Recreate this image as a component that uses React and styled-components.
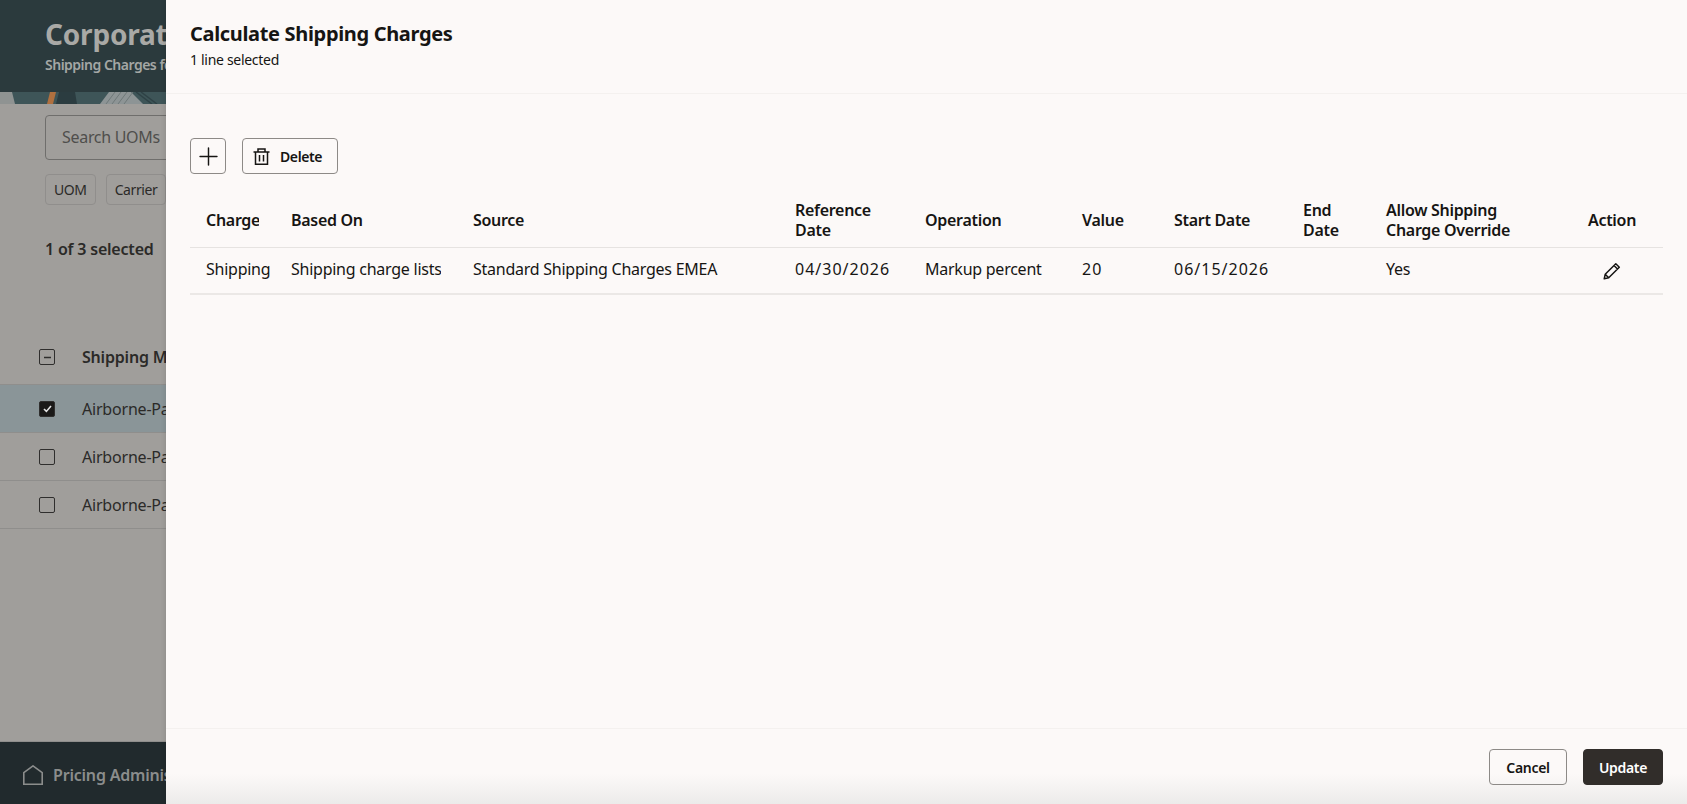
import React from 'react'
import styled, { createGlobalStyle } from 'styled-components'
import { Plus } from 'lucide-react'

const GlobalStyle = createGlobalStyle`
  html, body {
    margin: 0;
    height: 100%;
    overflow: hidden;
    background: #a09e9b;
  }
  #root {
    height: 100%;
  }
  * {
    box-sizing: border-box;
  }
`

const FONT = `"Noto Sans", "Open Sans", sans-serif`

const Page = styled.div`
  display: flex;
  width: 1687px;
  height: 804px;
  font-family: ${FONT};
  letter-spacing: -0.2px;
  overflow: hidden;
`

const Backdrop = styled.aside`
  display: flex;
  flex-direction: column;
  width: 166px;
  flex: none;
  overflow: hidden;
  background: #a09e9b;
  color: #2b2a28;
`

const Hero = styled.header`
  height: 92px;
  padding: 16px 0 0 45px;
  background: #2b3a3d;
  white-space: nowrap;
`

const HeroTitle = styled.div`
  font-size: 28px;
  line-height: 36px;
  font-weight: 700;
  color: #a9a9a6;
`

const HeroSub = styled.div`
  margin-top: 3px;
  font-size: 14px;
  line-height: 20px;
  font-weight: 600;
  letter-spacing: -0.5px;
  color: #a4a7a5;
`

const HeroStrip = styled.div`
  height: 12px;
  background: #3e5558;
  svg {
    display: block;
  }
`

const BackdropTools = styled.div`
  display: flex;
  flex-direction: column;
  align-items: flex-start;
  padding: 11px 0 0 45px;
  white-space: nowrap;
`

const SearchBox = styled.div`
  width: 200px;
  height: 45px;
  padding-left: 16px;
  border: 1px solid #6f6e6c;
  border-radius: 4px;
  font-size: 16px;
  line-height: 43px;
  letter-spacing: -0.3px;
  color: #4f4e4c;
`

const ChipRow = styled.div`
  display: flex;
  gap: 10px;
  margin-top: 14px;
`

const Chip = styled.span`
  height: 31px;
  padding: 0 8px;
  border: 1px solid #908e8c;
  border-radius: 4px;
  font-size: 14px;
  line-height: 29px;
  letter-spacing: -0.4px;
`

const SelectedCount = styled.div`
  margin-top: 33px;
  font-size: 16px;
  font-weight: 600;
  line-height: 22px;
`

const BackdropList = styled.div`
  margin-top: 70px;
`

const BackdropRow = styled.div`
  display: flex;
  align-items: center;
  gap: 27px;
  height: ${(p) => (p.$head ? 55 : 48)}px;
  padding-left: 39px;
  white-space: nowrap;
  font-size: 16px;
  font-weight: ${(p) => (p.$head ? 600 : 400)};
  background: ${(p) => (p.$selected ? '#8a9598' : 'transparent')};
  border-bottom: 1px solid #8f8e8c;
`

const Check = styled.span`
  display: flex;
  align-items: center;
  justify-content: center;
  width: 16px;
  height: 16px;
  flex: none;
  border: 1.5px solid #2f2e2d;
  border-radius: 2px;
  background: ${(p) => (p.$checked ? '#1a1918' : 'transparent')};
`

const BottomBar = styled.footer`
  display: flex;
  align-items: center;
  gap: 10px;
  height: 63px;
  margin-top: auto;
  padding: 3px 0 0 23px;
  background: #212a2d;
  border-top: 1px solid #8f8e8c;
  color: #8b8d8c;
  font-size: 16px;
  font-weight: 600;
  white-space: nowrap;
  svg {
    flex: none;
  }
`

const Drawer = styled.section`
  display: flex;
  flex-direction: column;
  flex: 1;
  min-width: 0;
  background: #fcf9f8;
  color: #161513;
  box-shadow: -2px 0 4px rgba(0, 0, 0, 0.08);
  position: relative;
  z-index: 1;
`

const DrawerHead = styled.div`
  height: 94px;
  padding: 19px 24px 0;
  border-bottom: 1px solid #f4f1ef;
`

const Title = styled.h1`
  margin: 0;
  font-size: 20px;
  line-height: 30px;
  font-weight: 700;
  letter-spacing: -0.33px;
`

const Subtitle = styled.div`
  font-size: 14px;
  line-height: 20px;
  margin-top: 1px;
  letter-spacing: -0.3px;
`

const DrawerBody = styled.div`
  flex: 1;
  padding: 44px 24px 0;
`

const Toolbar = styled.div`
  display: flex;
  gap: 16px;
`

const ToolButton = styled.button`
  display: flex;
  align-items: center;
  gap: 10px;
  height: 36px;
  width: ${(p) => p.$width}px;
  padding: 0 ${(p) => (p.$icon ? 0 : 10)}px;
  justify-content: ${(p) => (p.$icon ? 'center' : 'flex-start')};
  border: 1px solid #8d8a87;
  border-radius: 4px;
  background: transparent;
  color: #161513;
  font-family: ${FONT};
  font-size: 14px;
  font-weight: 600;
  letter-spacing: -0.4px;
  svg {
    flex: none;
  }
`

const Table = styled.table`
  width: 1473px;
  margin-top: 14px;
  border-collapse: collapse;
  table-layout: fixed;
`

const Th = styled.th`
  height: 59px;
  padding: 6px 16px 0;
  border-bottom: 1px solid #e6e3e1;
  font-size: 16px;
  line-height: 20px;
  font-weight: 600;
  letter-spacing: -0.3px;
  text-align: ${(p) => (p.$center ? 'center' : 'left')};
  overflow: hidden;
`

const Td = styled.td`
  height: 47px;
  padding: 0 16px 2px;
  border-bottom: 2px solid #ebe8e6;
  font-size: 16px;
  line-height: 20px;
  white-space: nowrap;
  letter-spacing: ${(p) => (p.$digits ? '1px' : '-0.25px')};
  text-align: ${(p) => (p.$center ? 'center' : 'left')};
  overflow: ${(p) => (p.$spill ? 'visible' : 'hidden')};
  svg {
    display: block;
    margin: 3px auto 0;
  }
`

const Clip = styled.div`
  overflow: hidden;
`

const DrawerFoot = styled.div`
  display: flex;
  justify-content: flex-end;
  gap: 16px;
  height: 76px;
  padding: 20px 24px 0;
  border-top: 1px solid #f4f1ef;
  background: linear-gradient(to bottom, #fcf9f8 60%, #ecebea 100%);
`

const FootButton = styled.button`
  height: 36px;
  width: ${(p) => p.$width}px;
  border: 1px solid ${(p) => (p.$primary ? '#312d2a' : '#8d8a87')};
  border-radius: 4px;
  background: ${(p) => (p.$primary ? '#312d2a' : 'transparent')};
  color: ${(p) => (p.$primary ? '#fff' : '#161513')};
  font-family: ${FONT};
  font-size: 14px;
  font-weight: 600;
  letter-spacing: -0.3px;
`

const columns = [85, 182, 322, 130, 157, 92, 129, 83, 191, 102]

function HomeIcon() {
  return (
    <svg width="20" height="20" viewBox="0 0 20 20" fill="none" stroke="#8b8d8c" strokeWidth="1.6">
      <path d="M.8 19.2V7.6L10 .9l9.2 6.7v11.6z" />
    </svg>
  )
}

function TrashIcon() {
  return (
    <svg width="17" height="17" viewBox="0 0 17 17" fill="none" stroke="#161513" strokeWidth="1.5">
      <path d="M.5 4h16M5 4V1h7v3M2.5 4v12.2h12V4M6.5 7v6.5M10.5 7v6.5" />
    </svg>
  )
}

function PencilIcon() {
  return (
    <svg width="18" height="18" viewBox="0 0 18 18" fill="none" stroke="#161513" strokeWidth="1.5" strokeLinejoin="round">
      <path d="M1.2 16.8l1-4.5L12.8 1.7l3.5 3.5L5.7 15.8zM2.2 12.3l3.5 3.5M11 3.5l3.5 3.5" />
    </svg>
  )
}

function HeroPattern() {
  return (
    <svg width="166" height="12" viewBox="0 0 166 12">
      <rect width="166" height="12" fill="#3e5558" />
      <path d="M0 0h12l3 12H0z" fill="#8f9392" />
      <path d="M47 12l3-12h6l-3 12z" fill="#b0703f" />
      <path d="M59 0h16l2 12H56z" fill="#2b3c40" />
      <path d="M100 12l9-12h22l12 12z" fill="#8d9495" />
      <path d="M106 12l9-12M112 12l9-12M118 12l9-12M124 12l9-12" stroke="#6f7879" strokeWidth="1" />
      <path d="M136 0l16 12M141 0l16 12" stroke="#2f4246" strokeWidth="1.5" />
    </svg>
  )
}

export default function App() {
  return (
    <Page>
      <GlobalStyle />
      <Backdrop>
        <Hero>
          <HeroTitle>Corporate</HeroTitle>
          <HeroSub>Shipping Charges for</HeroSub>
        </Hero>
        <HeroStrip>
          <HeroPattern />
        </HeroStrip>
        <BackdropTools>
          <SearchBox>Search UOMs</SearchBox>
          <ChipRow>
            <Chip>UOM</Chip>
            <Chip>Carrier</Chip>
          </ChipRow>
          <SelectedCount>1 of 3 selected</SelectedCount>
        </BackdropTools>
        <BackdropList>
          <BackdropRow $head>
            <Check>
              <svg width="9" height="9" viewBox="0 0 9 9">
                <path d="M1 4.5h7" stroke="#2f2e2d" strokeWidth="1.5" />
              </svg>
            </Check>
            Shipping Method
          </BackdropRow>
          <BackdropRow $selected>
            <Check $checked>
              <svg width="11" height="11" viewBox="0 0 11 11" fill="none">
                <path d="M2 6l2.4 2.4L9 3" stroke="#e4e4e4" strokeWidth="1.6" />
              </svg>
            </Check>
            Airborne-Parcel
          </BackdropRow>
          <BackdropRow>
            <Check />
            Airborne-Parcel
          </BackdropRow>
          <BackdropRow>
            <Check />
            Airborne-Parcel
          </BackdropRow>
        </BackdropList>
        <BottomBar>
          <HomeIcon />
          Pricing Administration
        </BottomBar>
      </Backdrop>
      <Drawer>
        <DrawerHead>
          <Title>Calculate Shipping Charges</Title>
          <Subtitle>1 line selected</Subtitle>
        </DrawerHead>
        <DrawerBody>
          <Toolbar>
            <ToolButton $icon $width={36} aria-label="Add">
              <Plus size={29} strokeWidth={1.2} />
            </ToolButton>
            <ToolButton $width={96}>
              <TrashIcon />
              Delete
            </ToolButton>
          </Toolbar>
          <Table>
            <colgroup>
              {columns.map((w, i) => (
                <col key={i} style={{ width: w }} />
              ))}
            </colgroup>
            <thead>
              <tr>
                <Th><Clip>Charge</Clip></Th>
                <Th>Based On</Th>
                <Th>Source</Th>
                <Th>Reference Date</Th>
                <Th>Operation</Th>
                <Th>Value</Th>
                <Th>Start Date</Th>
                <Th>End Date</Th>
                <Th>Allow Shipping Charge Override</Th>
                <Th $center>Action</Th>
              </tr>
            </thead>
            <tbody>
              <tr>
                <Td $spill>Shipping</Td>
                <Td><Clip>Shipping charge lists</Clip></Td>
                <Td>Standard Shipping Charges EMEA</Td>
                <Td $digits>04/30/2026</Td>
                <Td>Markup percent</Td>
                <Td $digits>20</Td>
                <Td $digits>06/15/2026</Td>
                <Td />
                <Td>Yes</Td>
                <Td $center>
                  <PencilIcon />
                </Td>
              </tr>
            </tbody>
          </Table>
        </DrawerBody>
        <DrawerFoot>
          <FootButton $width={78}>Cancel</FootButton>
          <FootButton $primary $width={80}>Update</FootButton>
        </DrawerFoot>
      </Drawer>
    </Page>
  )
}
